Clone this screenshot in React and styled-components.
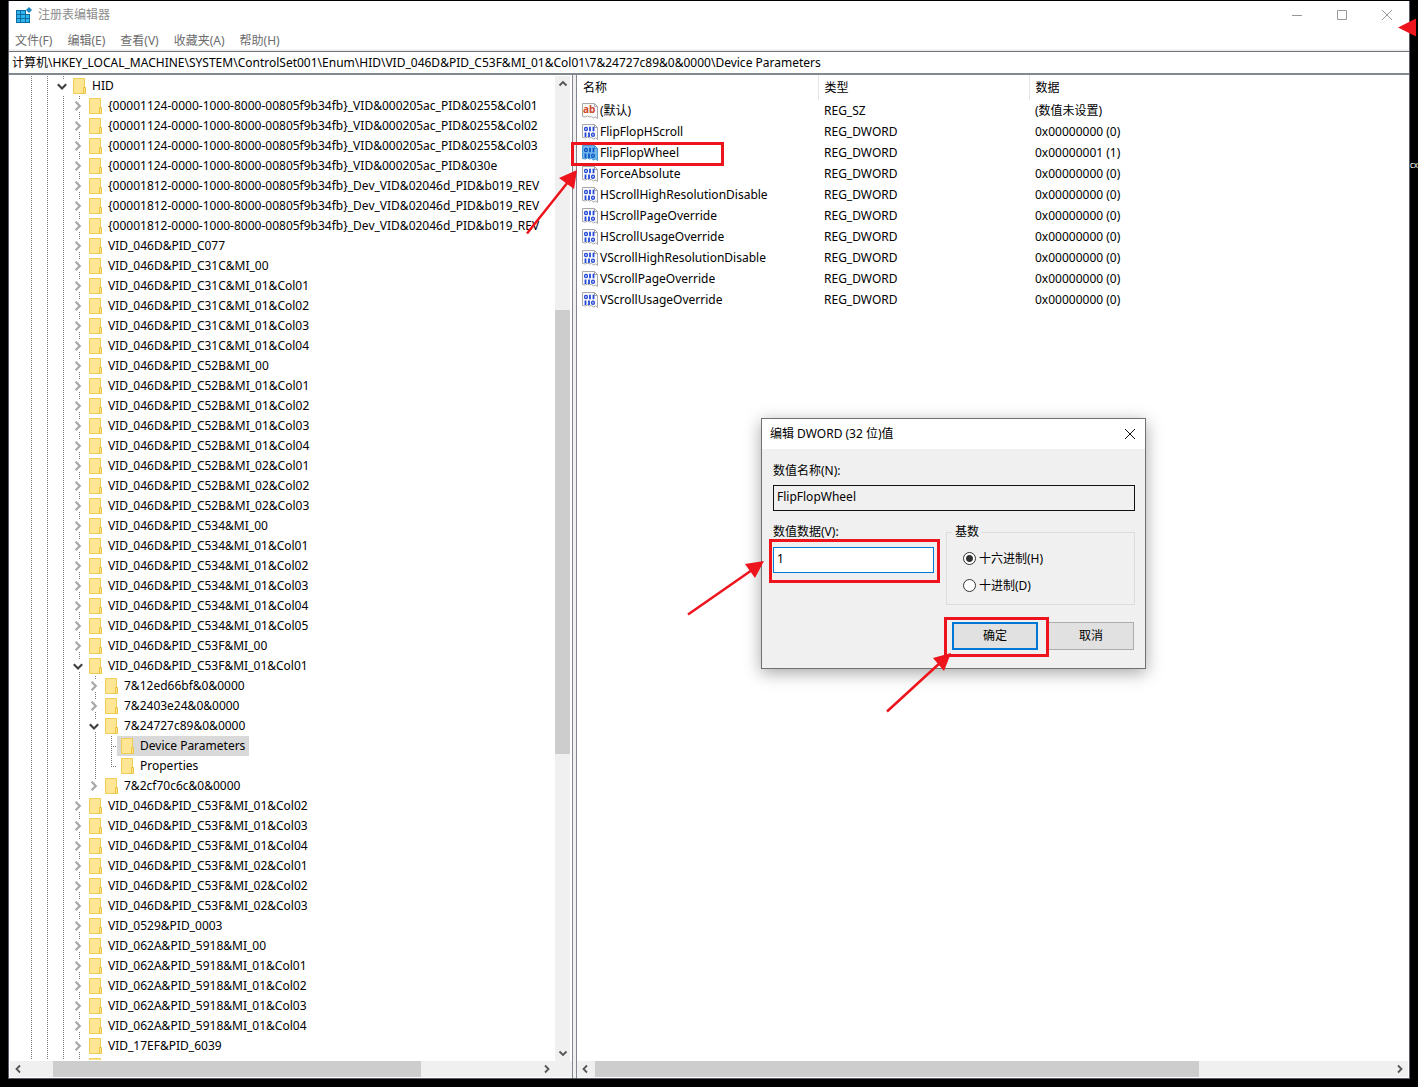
import React from 'react';
import styled, { createGlobalStyle, css } from 'styled-components';

/**
 * Styles
 */

const GlobalStyle = createGlobalStyle`
  * {
    box-sizing: border-box;
  }

  body {
    margin: 0;
    background: #000;
    color: #000;
    font-family: "Noto Sans", "Noto Sans CJK SC", sans-serif;
    font-size: 12px;
    line-height: 20px;
  }

  button, input {
    font: inherit;
    color: inherit;
  }
`;

const Desktop = styled.div`
  position: relative;
  height: 100vh;
  padding: 1px 8px 8px;
  overflow: hidden;
`;

const DesktopLabel = styled.span`
  position: absolute;
  top: 155px;
  right: 0;
  color: #fff;
  font-size: 8px;
`;

const Window = styled.main`
  position: relative;
  display: flex;
  flex-direction: column;
  height: 100%;
  background: #fff;
  border: 1px solid #5b5e66;
  border-top: 0;
`;

const TitleBar = styled.header`
  display: flex;
  align-items: center;
  height: 28px;
  padding-left: 7px;
  color: #8c8c8c;
`;

const Title = styled.h1`
  flex: 1;
  margin: 0 0 0 5px;
  font-size: 12px;
  font-weight: 400;
`;

const CaptionButton = styled.button`
  display: flex;
  align-items: center;
  justify-content: center;
  width: 45px;
  height: 28px;
  padding: 0;
  background: none;
  border: 0;
`;

const Menu = styled.nav`
  display: flex;
  gap: 15px;
  height: 22px;
  padding: 2px 6px 0;
  border-bottom: 2px solid #f0f0f0;
`;

const MenuLink = styled.a`
  height: 18px;
  color: #6d6d6d;
  text-decoration: none;
`;

const Address = styled.input`
  width: 100%;
  height: 24px;
  padding: 0 3px 2px;
  border: 1px solid #6f7178;
  border-width: 1px 0 2px;
  border-bottom-color: #828790;
  outline: none;
`;

const Panes = styled.div`
  display: flex;
  flex: 1;
  min-height: 0;
  background: #f0f0f0;
`;

const Pane = styled.section`
  display: flex;
  flex-direction: column;
  min-width: 0;
  background: #fff;
  padding-bottom: 1px;
`;

const TreePane = styled(Pane)`
  flex: 0 0 564px;
  padding-top: 1px;
  padding-left: 1px;
  border-right: 1px solid #828790;
`;

const ListPane = styled(Pane)`
  flex: 1;
  margin-left: 3px;
  padding-right: 1px;
  border-left: 1px solid #828790;
`;

const TreeBody = styled.div`
  display: flex;
  flex: 1;
  min-height: 0;
`;

const Tree = styled.ul`
  flex: 1;
  min-width: 0;
  margin: 0 0 1px;
  padding: 0 0 0 13px;
  overflow: hidden;
  list-style: none;
`;

const TreeRow = styled.li`
  display: flex;
  height: 20px;
  white-space: nowrap;
`;

const dots = 'repeating-linear-gradient(to bottom, #7a7a7a 0 1px, transparent 1px 2px)';

const Guide = styled.span`
  flex: none;
  width: 16px;
  background: ${dots} 8px 0 / 1px 100% no-repeat;
`;

const Toggle = styled.button`
  display: flex;
  flex: none;
  align-items: center;
  justify-content: center;
  width: 14px;
  padding: 0;
  border: 0;
  background-color: transparent;
  background-image: ${dots}, ${dots};
  background-position: 8px 0, 8px 16px;
  background-size: 1px 4px, 1px ${p => (p.$tail ? '4px' : '0')};
  background-repeat: no-repeat;
`;

const Branch = styled.span`
  flex: none;
  width: 14px;
  background-image: ${dots}, repeating-linear-gradient(to right, #7a7a7a 0 1px, transparent 1px 2px);
  background-position: 8px 0, 8px 10px;
  background-size: 1px ${p => (p.$last ? '10px' : '100%')}, 6px 1px;
  background-repeat: no-repeat;
`;

const TreeLabel = styled.span`
  display: flex;
  align-items: center;
  gap: 5px;
  padding: 0 4px;
  background: ${p => (p.$selected ? '#d9d9d9' : 'none')};
`;

const Bar = styled.div`
  display: flex;
  flex: none;
  background: #f0f0f0;
  ${p => (p.$vertical ? css`
    flex-direction: column;
    width: 17px;
    border-right: 2px solid #fff;
  ` : css`
    height: 16px;
  `)}
`;

const ArrowButton = styled.button`
  display: flex;
  flex: none;
  align-items: center;
  justify-content: center;
  width: 16px;
  height: 16px;
  padding: 0;
  background: none;
  border: 0;
`;

const Track = styled.div`
  display: flex;
  flex: 1;
  flex-direction: inherit;
`;

const Gap = styled.span`
  flex: ${p => p.$size} 0 0;
`;

const Thumb = styled(Gap)`
  background: #cdcdcd;
`;

const Corner = styled.span`
  flex: none;
  width: 17px;
`;

const ListBody = styled.div`
  flex: 1;
  min-height: 0;
  overflow: hidden;
`;

const Table = styled.table`
  width: 100%;
  table-layout: fixed;
  border-collapse: collapse;
  text-align: left;
`;

const HeadCell = styled.th`
  width: ${p => p.$width};
  height: 25px;
  padding: 0 6px;
  border-right: 1px solid #e5e5e5;
  font-weight: 400;

  &:last-child {
    border-right: 0;
  }
`;

const Cell = styled.td`
  height: 21px;
  padding: 0 6px;
  white-space: nowrap;
`;

const ValueName = styled.span`
  display: flex;
  align-items: center;
  gap: 2px;
  margin-left: -1px;
`;

const Dialog = styled.form`
  position: absolute;
  top: 418px;
  left: 761px;
  width: 385px;
  background: #f0f0f0;
  border: 1px solid #707070;
  box-shadow: 0 4px 16px rgba(0, 0, 0, .35);
`;

const DialogHeader = styled.header`
  display: flex;
  align-items: center;
  justify-content: space-between;
  height: 30px;
  padding-left: 8px;
  background: #fff;
`;

const DialogTitle = styled.h2`
  margin: 0;
  font-size: 12px;
  font-weight: 400;
`;

const CloseButton = styled(CaptionButton)`
  width: 30px;
`;

const DialogBody = styled.div`
  padding: 12px 10px 18px 11px;
`;

const Label = styled.label`
  display: block;
  height: 20px;
`;

const Input = styled.input`
  display: block;
  width: 100%;
  height: 26px;
  margin-top: 4px;
  padding: 0 3px 3px;
  background: ${p => (p.readOnly ? '#f0f0f0' : '#fff')};
  border: 1px solid ${p => (p.readOnly ? '#111' : '#0078d7')};
  outline: none;
`;

const Columns = styled.div`
  display: flex;
  gap: 12px;
  margin-top: 11px;
`;

const Field = styled.div`
  width: 161px;
`;

const ValueInput = styled(Input)`
  margin-top: 5px;
`;

const Base = styled.fieldset`
  flex: 1;
  min-width: 0;
  height: 83px;
  margin: 0;
  padding: 3px 16px;
  border: 1px solid #dcdcdc;
`;

const Legend = styled.legend`
  margin-left: -11px;
  padding: 0 3px;
`;

const RadioLabel = styled.label`
  display: flex;
  align-items: center;
  gap: 3px;
  height: 27px;
`;

const Radio = styled.input`
  appearance: none;
  width: 13px;
  height: 13px;
  margin: 0;
  border: 1px solid #333;
  border-radius: 50%;
  background: #fff;

  &:checked {
    background: radial-gradient(circle, #333 0 3px, #fff 4px);
  }
`;

const Actions = styled.div`
  display: flex;
  justify-content: flex-end;
  gap: 10px;
  margin: 17px 1px 0 0;
`;

const Button = styled.button`
  width: 86px;
  height: 28px;
  padding: 0;
  background: #e1e1e1;
  border: ${p => (p.$primary ? '2px solid #0078d7' : '1px solid #adadad')};
`;

const Marks = styled.svg`
  position: absolute;
  top: 0;
  left: 0;
  pointer-events: none;
`;

/**
 * Icons
 */

const arrowPaths = {
  left: 'M7 1.5 3.5 5 7 8.5',
  right: 'M3 1.5 6.500 5 3 8.5',
  up: 'M1.5 6.5 5 3l3.500 3.5',
  down: 'M1.5 3.500 5 7l3.500-3.5',
};

const Arrow = ({ dir, size = 10, color = '#555' }) => (
  <svg width={size} height={size} viewBox="0 0 10 10" fill="none" stroke={color} strokeWidth="1.8">
    <path d={arrowPaths[dir]} />
  </svg>
);

const Folder = () => (
  <svg width="14" height="16" viewBox="0 0 14 16">
    <path d="M.5.5h11v15H.5z" fill="#ffe694" stroke="#f0cd55" />
    <path d="M10.5 9.5h2v6h-2z" fill="#ffe694" stroke="#e9c240" />
  </svg>
);

const RegistryIcon = () => (
  <svg width="17" height="16" viewBox="0 0 17 16">
    <path d="M0 3h10v4h4v9H0z" fill="#0d6b9d" />
    <path
      d="M1 4h3v3H1zM5 4h4v3H5zM1 8h3v3H1zM5 8h4v3H5zM10 8h3v3h-3zM1 12h3v3H1zM5 12h4v3H5zM10 12h3v3h-3z"
      fill="#2fb4f0"
    />
    <path d="m13 0 3 3-3 3-3-3z" fill="#1787c2" />
  </svg>
);

const ValueIcon = ({ text, selected }) => (
  <svg width="16" height="16" viewBox="0 0 16 16" fill="none">
    <path
      d="M.5.5h12l3 3v12l-2-1.500-2 1-2-1.500-2 .5-2-1-2 1-3-.5z"
      fill={selected ? '#74b9ec' : '#fafafa'}
      stroke={selected ? '#4a97d2' : '#a8a8a8'}
    />
    <path d="M12.5.5v3h3" stroke={selected ? '#4a97d2' : '#a8a8a8'} />
    {text ? (
      <text x="1" y="10" fontSize="10" fontWeight="700" fill="#d0492a">ab</text>
    ) : (
      <g stroke={selected ? '#0b55c4' : '#2348d8'} strokeWidth="1.4">
        <ellipse cx="4" cy="5" rx="1.4" ry="1.600" />
        <path d="M8 2.800v4.400M11.500 2.800v4.400M3.500 8.500v4.400M7 8.500v4.400" strokeWidth="1.8" />
        <ellipse cx="11" cy="10.700" rx="1.4" ry="1.600" />
      </g>
    )}
  </svg>
);

const Cross = ({ color }) => (
  <svg width="12" height="12" viewBox="0 0 12 12" stroke={color}>
    <path d="m1 1 10 10M11 1 1 11" />
  </svg>
);

/**
 * Data
 */

const menu = ['文件(F)', '编辑(E)', '查看(V)', '收藏夹(A)', '帮助(H)'];

const keys = [
  [0, 'HID', 'open'],
  [1, '{00001124-0000-1000-8000-00805f9b34fb}_VID&000205ac_PID&0255&Col01'],
  [1, '{00001124-0000-1000-8000-00805f9b34fb}_VID&000205ac_PID&0255&Col02'],
  [1, '{00001124-0000-1000-8000-00805f9b34fb}_VID&000205ac_PID&0255&Col03'],
  [1, '{00001124-0000-1000-8000-00805f9b34fb}_VID&000205ac_PID&030e'],
  [1, '{00001812-0000-1000-8000-00805f9b34fb}_Dev_VID&02046d_PID&b019_REV'],
  [1, '{00001812-0000-1000-8000-00805f9b34fb}_Dev_VID&02046d_PID&b019_REV'],
  [1, '{00001812-0000-1000-8000-00805f9b34fb}_Dev_VID&02046d_PID&b019_REV'],
  [1, 'VID_046D&PID_C077'],
  [1, 'VID_046D&PID_C31C&MI_00'],
  [1, 'VID_046D&PID_C31C&MI_01&Col01'],
  [1, 'VID_046D&PID_C31C&MI_01&Col02'],
  [1, 'VID_046D&PID_C31C&MI_01&Col03'],
  [1, 'VID_046D&PID_C31C&MI_01&Col04'],
  [1, 'VID_046D&PID_C52B&MI_00'],
  [1, 'VID_046D&PID_C52B&MI_01&Col01'],
  [1, 'VID_046D&PID_C52B&MI_01&Col02'],
  [1, 'VID_046D&PID_C52B&MI_01&Col03'],
  [1, 'VID_046D&PID_C52B&MI_01&Col04'],
  [1, 'VID_046D&PID_C52B&MI_02&Col01'],
  [1, 'VID_046D&PID_C52B&MI_02&Col02'],
  [1, 'VID_046D&PID_C52B&MI_02&Col03'],
  [1, 'VID_046D&PID_C534&MI_00'],
  [1, 'VID_046D&PID_C534&MI_01&Col01'],
  [1, 'VID_046D&PID_C534&MI_01&Col02'],
  [1, 'VID_046D&PID_C534&MI_01&Col03'],
  [1, 'VID_046D&PID_C534&MI_01&Col04'],
  [1, 'VID_046D&PID_C534&MI_01&Col05'],
  [1, 'VID_046D&PID_C53F&MI_00'],
  [1, 'VID_046D&PID_C53F&MI_01&Col01', 'open'],
  [2, '7&12ed66bf&0&0000'],
  [2, '7&2403e24&0&0000'],
  [2, '7&24727c89&0&0000', 'open'],
  [3, 'Device Parameters', 'selected'],
  [3, 'Properties', 'last'],
  [2, '7&2cf70c6c&0&0000', 'last'],
  [1, 'VID_046D&PID_C53F&MI_01&Col02'],
  [1, 'VID_046D&PID_C53F&MI_01&Col03'],
  [1, 'VID_046D&PID_C53F&MI_01&Col04'],
  [1, 'VID_046D&PID_C53F&MI_02&Col01'],
  [1, 'VID_046D&PID_C53F&MI_02&Col02'],
  [1, 'VID_046D&PID_C53F&MI_02&Col03'],
  [1, 'VID_0529&PID_0003'],
  [1, 'VID_062A&PID_5918&MI_00'],
  [1, 'VID_062A&PID_5918&MI_01&Col01'],
  [1, 'VID_062A&PID_5918&MI_01&Col02'],
  [1, 'VID_062A&PID_5918&MI_01&Col03'],
  [1, 'VID_062A&PID_5918&MI_01&Col04'],
  [1, 'VID_17EF&PID_6039'],
  [1, ''],
];

const values = [
  ['(默认)', 'REG_SZ', '(数值未设置)'],
  ['FlipFlopHScroll', 'REG_DWORD', '0x00000000 (0)'],
  ['FlipFlopWheel', 'REG_DWORD', '0x00000001 (1)'],
  ['ForceAbsolute', 'REG_DWORD', '0x00000000 (0)'],
  ['HScrollHighResolutionDisable', 'REG_DWORD', '0x00000000 (0)'],
  ['HScrollPageOverride', 'REG_DWORD', '0x00000000 (0)'],
  ['HScrollUsageOverride', 'REG_DWORD', '0x00000000 (0)'],
  ['VScrollHighResolutionDisable', 'REG_DWORD', '0x00000000 (0)'],
  ['VScrollPageOverride', 'REG_DWORD', '0x00000000 (0)'],
  ['VScrollUsageOverride', 'REG_DWORD', '0x00000000 (0)'],
];

/**
 * Components
 */

const ScrollBar = ({ vertical, corner, before, size, after }) => (
  <Bar $vertical={vertical}>
    <ArrowButton type="button" aria-label="Scroll back">
      <Arrow dir={vertical ? 'up' : 'left'} />
    </ArrowButton>
    <Track>
      <Gap $size={before} />
      <Thumb $size={size} />
      <Gap $size={after} />
    </Track>
    <ArrowButton type="button" aria-label="Scroll forward">
      <Arrow dir={vertical ? 'down' : 'right'} />
    </ArrowButton>
    {corner && <Corner />}
  </Bar>
);

const KeyRow = ({ level, name, state }) => {
  const open = state === 'open';

  return (
    <TreeRow>
      {Array.from({ length: level + 2 }, (_, i) => <Guide key={i} />)}
      {level === 3 ? (
        <Branch $last={state === 'last'} />
      ) : (
        <Toggle type="button" aria-label={name} $tail={level > 0 && state !== 'last'}>
          <Arrow dir={open ? 'down' : 'right'} size={12} color={open ? '#404040' : '#a6a6a6'} />
        </Toggle>
      )}
      <TreeLabel $selected={state === 'selected'}>
        <Folder />
        {name}
      </TreeLabel>
    </TreeRow>
  );
};

const EditDialog = () => (
  <Dialog onSubmit={e => e.preventDefault()}>
    <DialogHeader>
      <DialogTitle>编辑 DWORD (32 位)值</DialogTitle>
      <CloseButton type="button" aria-label="Close"><Cross color="#111" /></CloseButton>
    </DialogHeader>
    <DialogBody>
      <Label htmlFor="value-name">数值名称(N):</Label>
      <Input id="value-name" readOnly value="FlipFlopWheel" />
      <Columns>
        <Field>
          <Label htmlFor="value-data">数值数据(V):</Label>
          <ValueInput id="value-data" defaultValue="1" />
        </Field>
        <Base>
          <Legend>基数</Legend>
          <RadioLabel>
            <Radio type="radio" name="base" defaultChecked />
            十六进制(H)
          </RadioLabel>
          <RadioLabel>
            <Radio type="radio" name="base" />
            十进制(D)
          </RadioLabel>
        </Base>
      </Columns>
      <Actions>
        <Button type="submit" $primary>确定</Button>
        <Button type="button">取消</Button>
      </Actions>
    </DialogBody>
  </Dialog>
);

const Annotations = () => (
  <Marks width="1418" height="1087" viewBox="0 0 1418 1087">
    <g fill="none" stroke="#ed141d" strokeWidth="3">
      <path d="M572.5 143.5h150v21h-150zM770.5 540.5h168v41h-168zM945.5 618.5h102v37h-102z" />
      <path d="M527 233.5 568 182M688 614.5 752 570M887 711.5 941 662" strokeWidth="2.5" />
    </g>
    <g fill="#ed141d">
      <path d="m577 170-3 19-15-11zM764 561l-19 3 10 14zM951 653l-18 5 11 13zM1398 27.5l18-9v18z" />
    </g>
  </Marks>
);

const App = () => (
  <Desktop>
    <GlobalStyle />
    <DesktopLabel>cx</DesktopLabel>
    <Window>
      <TitleBar>
        <RegistryIcon />
        <Title>注册表编辑器</Title>
        <CaptionButton type="button" aria-label="Minimize">
          <svg width="10" height="10" stroke="#999"><path d="M0 5.5h10" /></svg>
        </CaptionButton>
        <CaptionButton type="button" aria-label="Maximize">
          <svg width="10" height="10" stroke="#999" fill="none"><path d="M.5.5h9v9h-9z" /></svg>
        </CaptionButton>
        <CaptionButton type="button" aria-label="Close"><Cross color="#999" /></CaptionButton>
      </TitleBar>
      <Menu>
        {menu.map(item => <MenuLink key={item} href="#menu">{item}</MenuLink>)}
      </Menu>
      <Address
        aria-label="Address"
        defaultValue="计算机\HKEY_LOCAL_MACHINE\SYSTEM\ControlSet001\Enum\HID\VID_046D&PID_C53F&MI_01&Col01\7&24727c89&0&0000\Device Parameters"
      />
      <Panes>
        <TreePane>
          <TreeBody>
            <Tree>
              {keys.map(([level, name, state], i) => (
                <KeyRow key={i} level={level} name={name} state={state} />
              ))}
            </Tree>
            <ScrollBar vertical before={218} size={443} after={291} />
          </TreeBody>
          <ScrollBar corner before={27} size={366} after={118} />
        </TreePane>
        <ListPane>
          <ListBody>
            <Table>
              <thead>
                <tr>
                  <HeadCell $width="241px">名称</HeadCell>
                  <HeadCell $width="211px">类型</HeadCell>
                  <HeadCell>数据</HeadCell>
                </tr>
              </thead>
              <tbody>
                {values.map(([name, type, data], i) => (
                  <tr key={name}>
                    <Cell>
                      <ValueName>
                        <ValueIcon text={i === 0} selected={i === 2} />
                        {name}
                      </ValueName>
                    </Cell>
                    <Cell>{type}</Cell>
                    <Cell>{data}</Cell>
                  </tr>
                ))}
              </tbody>
            </Table>
          </ListBody>
          <ScrollBar before={2} size={605} after={193} />
        </ListPane>
      </Panes>
    </Window>
    <EditDialog />
    <Annotations />
  </Desktop>
);

export default App;
